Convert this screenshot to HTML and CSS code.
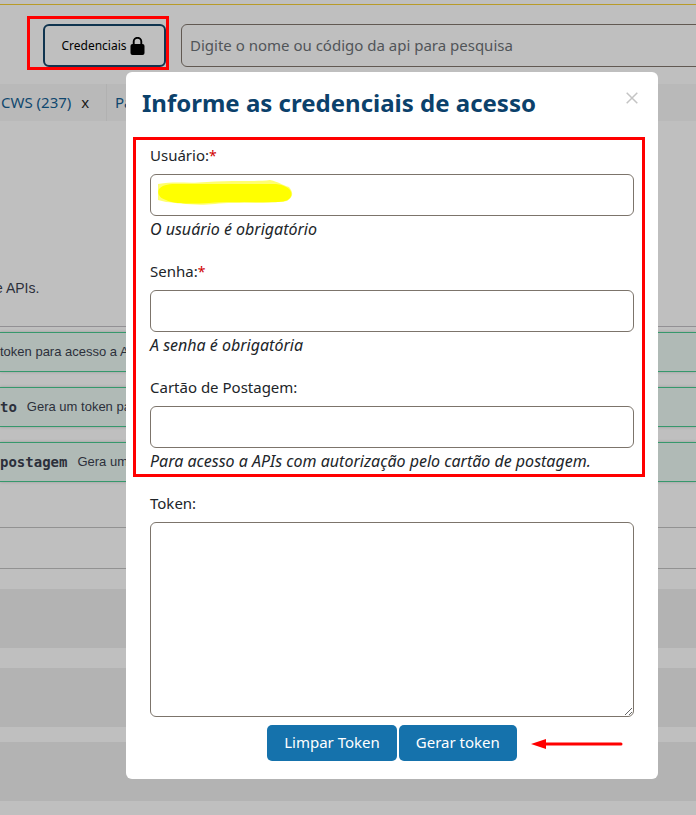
FILE: index.html
```html
<!DOCTYPE html>
<html lang="pt-BR">
<head>
<meta charset="utf-8">
<meta name="viewport" content="width=device-width, initial-scale=1">
<title>Informe as credenciais de acesso</title>
<link rel="stylesheet" href="styles.css">
</head>
<body>
<div class="page">
  <header class="topbar">
    <div class="credentials">
      <button class="credentials-button" type="button">Credenciais
        <svg class="lock" viewBox="0 0 14 18" aria-hidden="true"><path d="M3.2 8V4.6a3.8 3.8 0 0 1 7.6 0V8" fill="none" stroke="currentColor" stroke-width="1.9"/><rect y="7" width="14" height="11" rx="2" fill="currentColor"/></svg>
      </button>
      <span class="mark mark-button"></span>
    </div>
    <input class="search" type="search" aria-label="Pesquisar api" placeholder="Digite o nome ou código da api para pesquisa">
  </header>
  <nav class="tabs">
    <div class="tab tab-first"><a href="#cws">CWS (237)</a><button class="tab-close" type="button">x</button></div>
    <div class="tab"><a href="#pa">Pa</a></div>
  </nav>
  <main>
    <p class="intro">e APIs.</p>
    <section class="endpoints">
      <div class="endpoint"><span>token para acesso a A</span></div>
      <div class="endpoint"><code>to</code><span>Gera um token pa</span></div>
      <div class="endpoint"><code>postagem</code><span>Gera um</span></div>
    </section>
    <div class="rule"></div>
    <div class="rule rule-last"></div>
    <div class="band"></div>
    <div class="band"></div>
    <div class="band"></div>
  </main>
</div>
<div class="overlay">
  <form class="modal" role="dialog" aria-labelledby="title">
    <div class="modal-header">
      <h1 id="title">Informe as credenciais de acesso</h1>
      <button class="close" type="button" aria-label="Fechar"><svg viewBox="0 0 12 12" aria-hidden="true"><path d="M.7.7l10.6 10.6M11.3.7L.7 11.3" stroke="currentColor" stroke-width="1.5"/></svg></button>
    </div>
    <div class="fields">
      <span class="mark mark-fields"></span>
      <div class="field">
        <label for="user">Usuário:<span class="required">*</span></label>
        <div class="control">
          <input id="user" type="text">
          <svg class="highlight" viewBox="0 0 136 26" aria-hidden="true"><path d="M1 4C20 1 30 4 50 2C72 0 98 2 113 0C122 2 125 5 132 7C137 13 136 17 130 21C110 24 75 22 58 24C36 26 22 23 9 22L1 20Z" fill="#ffff70"/><path d="M2 9C7 4 13 4 21 4H119C127 5 133 8 134 12C136 18 130 22 121 22C94 23 73 21 52 23C31 24 17 24 9 20C2 18 0 13 2 9Z" fill="#ff0"/></svg>
        </div>
        <em>O usuário é obrigatório</em>
      </div>
      <div class="field">
        <label for="password">Senha:<span class="required">*</span></label>
        <div class="control"><input id="password" type="password"></div>
        <em>A senha é obrigatória</em>
      </div>
      <div class="field">
        <label for="card">Cartão de Postagem:</label>
        <div class="control"><input id="card" type="text"></div>
        <em>Para acesso a APIs com autorização pelo cartão de postagem.</em>
      </div>
    </div>
    <div class="token">
      <label for="token">Token:</label>
      <textarea id="token"></textarea>
    </div>
    <div class="actions">
      <button type="button">Limpar Token</button>
      <button type="button">Gerar token
        <svg class="arrow" viewBox="0 0 92 10" aria-hidden="true"><path d="M0 5L15 0V10Z" fill="#f00"/><path d="M14 5H90" stroke="#f00" stroke-width="3" stroke-linecap="round"/></svg>
      </button>
    </div>
  </form>
</div>
</body>
</html>
```

FILE: styles.css
```css
* { box-sizing: border-box; }
body {
  margin: 0;
  overflow: hidden;
  background: #bfbfbf;
  color: #212529;
  font: 15px/24px "Trebuchet MS", "Noto Sans", sans-serif;
}
button, input, textarea { font: inherit; }
a { text-decoration: none; }
.page { height: 100vh; overflow: hidden; }
.topbar {
  display: flex;
  align-items: flex-start;
  gap: 15px;
  margin-top: 4px;
  padding: 19px 0 17px 43px;
  border-top: 1px solid #b89b28;
}
.credentials { position: relative; flex: none; }
.credentials-button {
  display: flex;
  align-items: center;
  justify-content: center;
  gap: 3px;
  width: 123px;
  height: 43px;
  padding: 0 3px 0 0;
  border: 2px solid #10344f;
  border-radius: 6px;
  background: #bfbfbf;
  color: #000;
  font-size: 12px;
}
.lock { width: 15px; height: 18px; }
.mark { position: absolute; border: 3px solid #f00; pointer-events: none; }
.mark-button { inset: -8px -3px -3px -16px; }
.search {
  flex: none;
  width: calc(100% - 123px);
  height: 43px;
  padding: 0 8px 2px;
  border: 1px solid #615952;
  border-radius: 6px;
  background: #bfbfbf;
}
.search::placeholder { color: #515559; opacity: 1; }
.tabs { display: flex; height: 37px; background: #b9b9b9; }
.tab { display: flex; align-items: center; padding: 0 8px 2px; }
.tab-first { width: 107px; padding: 0 0 2px 1px; border-right: 1px solid #b1b1b1; }
.tab a { color: #10486f; }
.tab-close { margin-left: 10px; padding: 0; border: 0; background: none; color: #191919; }
.intro {
  margin: 0;
  padding: 156px 0 27px;
  border-bottom: 1px solid #929094;
  color: #2c303b;
  font: 14px/22px "Liberation Sans", sans-serif;
  text-indent: -5px;
}
.endpoints { display: grid; gap: 15px; padding: 5px 0 45px; }
.endpoint {
  display: flex;
  align-items: center;
  gap: 10px;
  height: 40px;
  border: solid #36986c;
  border-width: 1px 0;
  background: #b0bab6;
  box-shadow: 0 0 3px #00000030;
  color: #2c303b;
  font: 13px/20px "Liberation Sans", sans-serif;
  white-space: nowrap;
}
.endpoint code { font: bold 14px/20px "DejaVu Sans Mono", monospace; }
.rule { margin-bottom: 40px; border-top: 1px solid #929292; }
.rule-last { margin-bottom: 20px; }
.band { height: 59px; margin-bottom: 20px; background: #b3b3b3; }
.band + .band { margin-bottom: 15px; }
.overlay { position: absolute; inset: 0; padding: 72px 38px 36px 126px; }
.modal { padding-bottom: 18px; border-radius: 6px; background: #fff; }
.modal-header {
  display: flex;
  justify-content: space-between;
  align-items: flex-start;
  height: 71px;
  padding: 15px 20px 0 16px;
}
h1 { margin: 0; color: #0b416b; font-size: 24px; line-height: 32px; }
.close { display: flex; padding: 5px 0; border: 0; background: none; color: #c4c4c4; }
.close svg { width: 12px; height: 12px; }
.fields { position: relative; padding: 0 24px; }
.mark-fields { inset: -6px 13px 14px 7px; }
.field { padding-bottom: 18px; }
label, em { display: block; white-space: nowrap; }
label { margin-bottom: 7px; }
em { font-size: 16px; }
.required { color: #d00000; font-size: 14px; line-height: 1; }
.control { position: relative; margin-bottom: 1px; }
.control input, textarea {
  display: block;
  width: 100%;
  height: 42px;
  padding: 6px 8px;
  border: 1px solid #7c746b;
  border-radius: 6px;
  background: #fff;
}
.highlight { position: absolute; top: 6px; left: 7px; width: 136px; height: 26px; }
.token { padding: 0 24px; }
.token textarea { height: 195px; resize: vertical; }
.actions { display: flex; justify-content: center; gap: 2px; padding-top: 8px; }
.actions button {
  position: relative;
  height: 36px;
  padding: 0 17px 2px;
  border: 0;
  border-radius: 5px;
  background: #1572ac;
  color: #fff;
}
.arrow { position: absolute; top: 14px; left: calc(100% + 14px); width: 92px; height: 10px; }
```
